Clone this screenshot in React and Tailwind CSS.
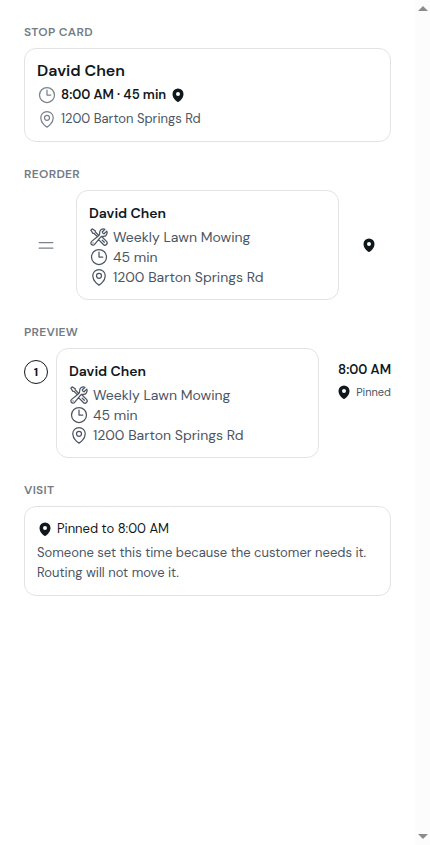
import {
  HiMapPin,
  HiOutlineBars2,
  HiOutlineClock,
  HiOutlineMapPin,
  HiOutlineWrenchScrewdriver,
} from "react-icons/hi2";

function Section({ title, children }) {
  return (
    <section className="flex flex-col gap-2">
      <h2 className="text-xs leading-4 font-semibold tracking-wide text-[#737b85] uppercase">{title}</h2>
      {children}
    </section>
  );
}

function Card({ className = "", children }) {
  return (
    <div className={`flex min-w-0 flex-col gap-1 rounded-xl border border-[#e2e3e5] bg-white p-3 ${className}`}>
      {children}
    </div>
  );
}

function Detail({ icon: Icon, children }) {
  return (
    <li className="flex items-center gap-1">
      <Icon className="size-5 shrink-0" aria-hidden="true" />
      <span>{children}</span>
    </li>
  );
}

function Pin({ label }) {
  return <HiMapPin className="size-4 shrink-0 text-[#11181c]" role="img" aria-label={label} />;
}

function JobCard() {
  return (
    <Card className="flex-1">
      <h3 className="text-sm leading-5 font-semibold text-[#11181c]">David Chen</h3>
      <ul className="text-sm leading-5 text-[#4b5563]">
        <Detail icon={HiOutlineWrenchScrewdriver}>Weekly Lawn Mowing</Detail>
        <Detail icon={HiOutlineClock}>45 min</Detail>
        <Detail icon={HiOutlineMapPin}>1200 Barton Springs Rd</Detail>
      </ul>
    </Card>
  );
}

function ScrollTrack() {
  return (
    <div className="flex w-[15px] shrink-0 flex-col items-center justify-between bg-[#fcfcfc] py-[6px]" aria-hidden="true">
      <svg className="h-[5px] w-[10px] fill-[#8b8b8b]" viewBox="0 0 10 5">
        <path d="M0 5 5 0l5 5z" />
      </svg>
      <svg className="h-[5px] w-[10px] fill-[#8b8b8b]" viewBox="0 0 10 5">
        <path d="M0 0h10L5 5z" />
      </svg>
    </div>
  );
}

export default function App() {
  return (
    <div className="flex min-h-screen bg-white font-['DM_Sans','Inter',sans-serif]">
      <main className="flex min-w-0 flex-1 flex-col gap-6 p-6">
        <Section title="Stop card">
          <Card>
            <h3 className="text-base leading-5 font-semibold text-[#11181c]">David Chen</h3>
            <div className="flex items-center gap-1 text-[13px] leading-5 font-semibold text-[#11181c]">
              <HiOutlineClock className="size-5 shrink-0 text-[#7b828c]" aria-hidden="true" />
              <span>8:00 AM · 45 min</span>
              <Pin label="Pinned" />
            </div>
            <div className="flex items-center gap-1 text-[13px] leading-5 text-[#4b5563]">
              <HiOutlineMapPin className="size-5 shrink-0 text-[#7b828c]" aria-hidden="true" />
              <span>1200 Barton Springs Rd</span>
            </div>
          </Card>
        </Section>

        <Section title="Reorder">
          <div className="flex items-center gap-2">
            <button type="button" aria-label="Reorder stop" className="flex size-11 shrink-0 items-center justify-center text-[#7b828c]">
              <HiOutlineBars2 className="size-5" aria-hidden="true" />
            </button>
            <JobCard />
            <button type="button" aria-label="Unpin stop" className="flex size-11 shrink-0 items-center justify-center">
              <Pin />
            </button>
          </div>
        </Section>

        <Section title="Preview">
          <div className="flex items-start gap-2">
            <span className="mt-3 flex size-6 shrink-0 items-center justify-center rounded-full border border-[#11181c] text-xs leading-4 font-bold text-[#11181c]">
              1
            </span>
            <JobCard />
            <div className="flex w-16 shrink-0 flex-col items-end gap-1 pt-3 whitespace-nowrap">
              <span className="text-[13px] leading-5 font-semibold text-[#11181c]">8:00 AM</span>
              <span className="flex items-center gap-1 text-[11px] leading-4 text-[#4b5563]">
                <Pin />
                Pinned
              </span>
            </div>
          </div>
        </Section>

        <Section title="Visit">
          <Card>
            <div className="flex items-center gap-1 text-[13px] leading-5 text-[#11181c]">
              <Pin />
              <span>Pinned to 8:00 AM</span>
            </div>
            <p className="text-[13px] leading-5 text-[#4b5563]">
              Someone set this time because the customer needs it. Routing will not move it.
            </p>
          </Card>
        </Section>
      </main>
      <ScrollTrack />
    </div>
  );
}
